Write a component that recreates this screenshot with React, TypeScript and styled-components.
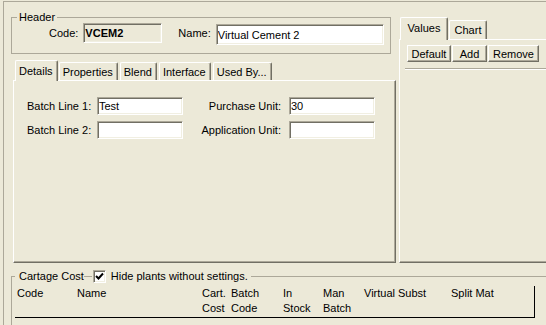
import React from 'react';
import styled, { createGlobalStyle } from 'styled-components';

const GlobalStyle = createGlobalStyle`
  html, body {
    margin: 0;
    padding: 0;
    background: #ece9d8;
  }
  body {
    font-family: "Liberation Sans", Arial, sans-serif;
    font-size: 11px;
    color: #000;
  }
`;

const Screen = styled.div`
  width: 546px;
  height: 325px;
  overflow: hidden;
  box-sizing: border-box;
  padding: 1px 0 0 3px;
  background: #ece9d8;
`;

const Frame = styled.div`
  height: 100%;
  display: flex;
  flex-direction: column;
  overflow: hidden;
  border-top: 1px solid #aca899;
  border-left: 1px solid #aca899;
`;

const TopArea = styled.div`
  display: flex;
  height: 261px;
  flex-shrink: 0;
`;

const LeftCol = styled.div`
  width: 392px;
  flex-shrink: 0;
  padding-left: 7px;
  box-sizing: border-box;
`;

const GroupBox = styled.fieldset<{ $width: number }>`
  margin: 0;
  width: ${(p) => p.$width}px;
  box-sizing: border-box;
  min-width: 0;
  border: 1px solid #aca899;
  padding: 0 5px 8px;
`;

const Legend = styled.legend`
  padding: 0 2px;
  line-height: 12px;
`;

const HeaderBox = styled(GroupBox)`
  margin-top: 9px;
`;

const HeaderRow = styled.div`
  display: flex;
  align-items: flex-start;
  margin-left: 32px;
`;

const Label = styled.span<{ $gapLeft?: number }>`
  line-height: 20px;
  margin-right: 5px;
  margin-left: ${(p) => p.$gapLeft ?? 0}px;
  white-space: nowrap;
`;

const Field = styled.input<{ $w: number; $h: number; $top?: number; $bold?: boolean; $readonly?: boolean }>`
  width: ${(p) => p.$w}px;
  height: ${(p) => p.$h}px;
  margin: ${(p) => p.$top ?? 0}px 0 0 0;
  box-sizing: border-box;
  padding: 0 1px;
  font: inherit;
  font-weight: ${(p) => (p.$bold ? 700 : 400)};
  color: #000;
  background: ${(p) => (p.$readonly ? '#ece9d8' : '#fff')};
  border: 1px solid;
  border-color: #aca899 #fff #fff #aca899;
  box-shadow: inset 1px 1px 0 #716f64, inset -1px -1px 0 #f1efe2;
  outline: none;
`;

const TabArea = styled.div`
  margin: 6px 0 0 2px;
  width: 383px;
`;

const TabStrip = styled.div<{ $h: number; $pad: number }>`
  display: flex;
  align-items: flex-end;
  height: ${(p) => p.$h}px;
  padding-left: ${(p) => p.$pad}px;
`;

const Tab = styled.div<{ $active?: boolean; $w?: number; $h: number }>`
  position: relative;
  z-index: ${(p) => (p.$active ? 2 : 1)};
  box-sizing: border-box;
  height: ${(p) => p.$h}px;
  ${(p) => (p.$w ? `width: ${p.$w}px;` : 'padding: 0 4px 0 3px;')}
  margin-right: ${(p) => (p.$active ? 1 : 2)}px;
  margin-bottom: ${(p) => (p.$active ? -1 : 0)}px;
  display: flex;
  align-items: ${(p) => (p.$active ? 'flex-start' : 'center')};
  justify-content: center;
  padding-top: ${(p) => (p.$active ? 4 : 0)}px;
  background: #ece9d8;
  border-top: 1px solid #fff;
  border-left: 1px solid #fff;
  border-right: 1px solid #716f64;
  border-radius: 2px 2px 0 0;
  box-shadow: inset -1px 0 0 #aca899;
  white-space: nowrap;
`;

const Panel = styled.div<{ $h: number }>`
  height: ${(p) => p.$h}px;
  box-sizing: border-box;
  background: #ece9d8;
  border-top: 1px solid #fff;
  border-left: 1px solid #fff;
  border-right: 1px solid #716f64;
  border-bottom: 1px solid #716f64;
  box-shadow: inset -1px -1px 0 #aca899;
`;

const DetailsPanel = styled(Panel)`
  padding: 16px 0 0 13px;
`;

const FormGrid = styled.div`
  display: grid;
  grid-template-columns: 70px 86px 106px 86px;
  grid-auto-rows: 18px;
  row-gap: 6px;
`;

const FormLabel = styled.span<{ $right?: boolean }>`
  line-height: 18px;
  white-space: nowrap;
  text-align: ${(p) => (p.$right ? 'right' : 'left')};
  padding-right: ${(p) => (p.$right ? 8 : 0)}px;
`;

const RightCol = styled.div`
  width: 160px;
  flex-shrink: 0;
  margin-left: 3px;
  padding-top: 15px;
`;

const ValuesPanel = styled(Panel)`
  padding: 5px 0 0 7px;
  border-right: none;
`;

const ButtonRow = styled.div`
  display: flex;
  gap: 1px;
`;

const Button = styled.div<{ $w: number }>`
  width: ${(p) => p.$w}px;
  height: 17px;
  box-sizing: border-box;
  display: flex;
  align-items: center;
  justify-content: center;
  background: #ece9d8;
  border-top: 1px solid #fff;
  border-left: 1px solid #fff;
  border-right: 1px solid #716f64;
  border-bottom: 1px solid #716f64;
  box-shadow: inset -1px -1px 0 #aca899;
`;

const Separator = styled.div`
  margin: 6px 0 0 -2px;
  border-top: 1px solid #aca899;
  border-bottom: 1px solid #fff;
`;

const CartageBox = styled(GroupBox)`
  margin: 7px 0 0 7px;
  padding: 3px 0 0 3px;
  height: 120px;
  flex-shrink: 0;
`;

const CartageLegend = styled.legend`
  display: flex;
  align-items: center;
  height: 13px;
  line-height: 13px;
  padding: 0 3px 0 4px;
`;

const Dash = styled.span`
  width: 8px;
  height: 0;
  margin: 0 1px 0 0;
  border-top: 1px solid #aca899;
`;

const CheckBox = styled.span`
  width: 13px;
  height: 13px;
  box-sizing: border-box;
  margin-right: 5px;
  display: flex;
  align-items: center;
  justify-content: center;
  background: #fff;
  border: 1px solid;
  border-color: #aca899 #fff #fff #aca899;
  box-shadow: inset 1px 1px 0 #716f64, inset -1px -1px 0 #f1efe2;
`;

const ColumnHeader = styled.div`
  width: 520px;
  box-sizing: border-box;
  display: grid;
  grid-template-columns: 60px 125px 29px 52px 40px 41px 87px 1fr;
  padding: 0 0 1px 2px;
  line-height: 15px;
  border-right: 1px solid #000;
  border-bottom: 1px solid #000;
`;

const HeadCell = styled.div`
  white-space: nowrap;
`;

const columns = [
  ['Code'],
  ['Name'],
  ['Cart.', 'Cost'],
  ['Batch', 'Code'],
  ['In', 'Stock'],
  ['Man', 'Batch'],
  ['Virtual Subst'],
  ['Split Mat'],
];

const detailTabs = ['Details', 'Properties', 'Blend', 'Interface', 'Used By...'];

export default function App() {
  return (
    <>
      <GlobalStyle />
      <Screen>
        <Frame>
          <TopArea>
            <LeftCol>
              <HeaderBox $width={380}>
                <Legend>Header</Legend>
                <HeaderRow>
                  <Label>Code:</Label>
                  <Field $w={79} $h={20} $bold $readonly defaultValue="VCEM2" readOnly />
                  <Label $gapLeft={16}>Name:</Label>
                  <Field $w={168} $h={21} $top={1} defaultValue="Virtual Cement 2" />
                </HeaderRow>
              </HeaderBox>
              <TabArea>
                <TabStrip $h={20} $pad={2}>
                  {detailTabs.map((t, i) => (
                    <Tab key={t} $active={i === 0} $h={i === 0 ? 21 : 18}>
                      {t}
                    </Tab>
                  ))}
                </TabStrip>
                <DetailsPanel $h={183}>
                  <FormGrid>
                    <FormLabel>Batch Line 1:</FormLabel>
                    <Field $w={86} $h={18} defaultValue="Test" />
                    <FormLabel $right>Purchase Unit:</FormLabel>
                    <Field $w={86} $h={18} defaultValue="30" />
                    <FormLabel>Batch Line 2:</FormLabel>
                    <Field $w={86} $h={18} defaultValue="" />
                    <FormLabel $right>Application Unit:</FormLabel>
                    <Field $w={86} $h={18} defaultValue="" />
                  </FormGrid>
                </DetailsPanel>
              </TabArea>
            </LeftCol>
            <RightCol>
              <TabStrip $h={22} $pad={1}>
                <Tab $active $w={48} $h={23}>
                  Values
                </Tab>
                <Tab $w={38} $h={19}>
                  Chart
                </Tab>
              </TabStrip>
              <ValuesPanel $h={224}>
                <ButtonRow>
                  <Button $w={44}>Default</Button>
                  <Button $w={35}>Add</Button>
                  <Button $w={51}>Remove</Button>
                </ButtonRow>
                <Separator />
              </ValuesPanel>
            </RightCol>
          </TopArea>
          <CartageBox $width={620}>
            <CartageLegend>
              Cartage Cost
              <Dash />
              <CheckBox>
                <svg width="9" height="9" viewBox="0 0 9 9">
                  <path d="M1 4 L3.5 6.5 L8 1.5" stroke="#000" strokeWidth="2" fill="none" />
                </svg>
              </CheckBox>
              Hide plants without settings.
            </CartageLegend>
            <ColumnHeader>
              {columns.map((lines) => (
                <HeadCell key={lines.join('-')}>
                  {lines.map((l) => (
                    <div key={l}>{l}</div>
                  ))}
                </HeadCell>
              ))}
            </ColumnHeader>
          </CartageBox>
        </Frame>
      </Screen>
    </>
  );
}
